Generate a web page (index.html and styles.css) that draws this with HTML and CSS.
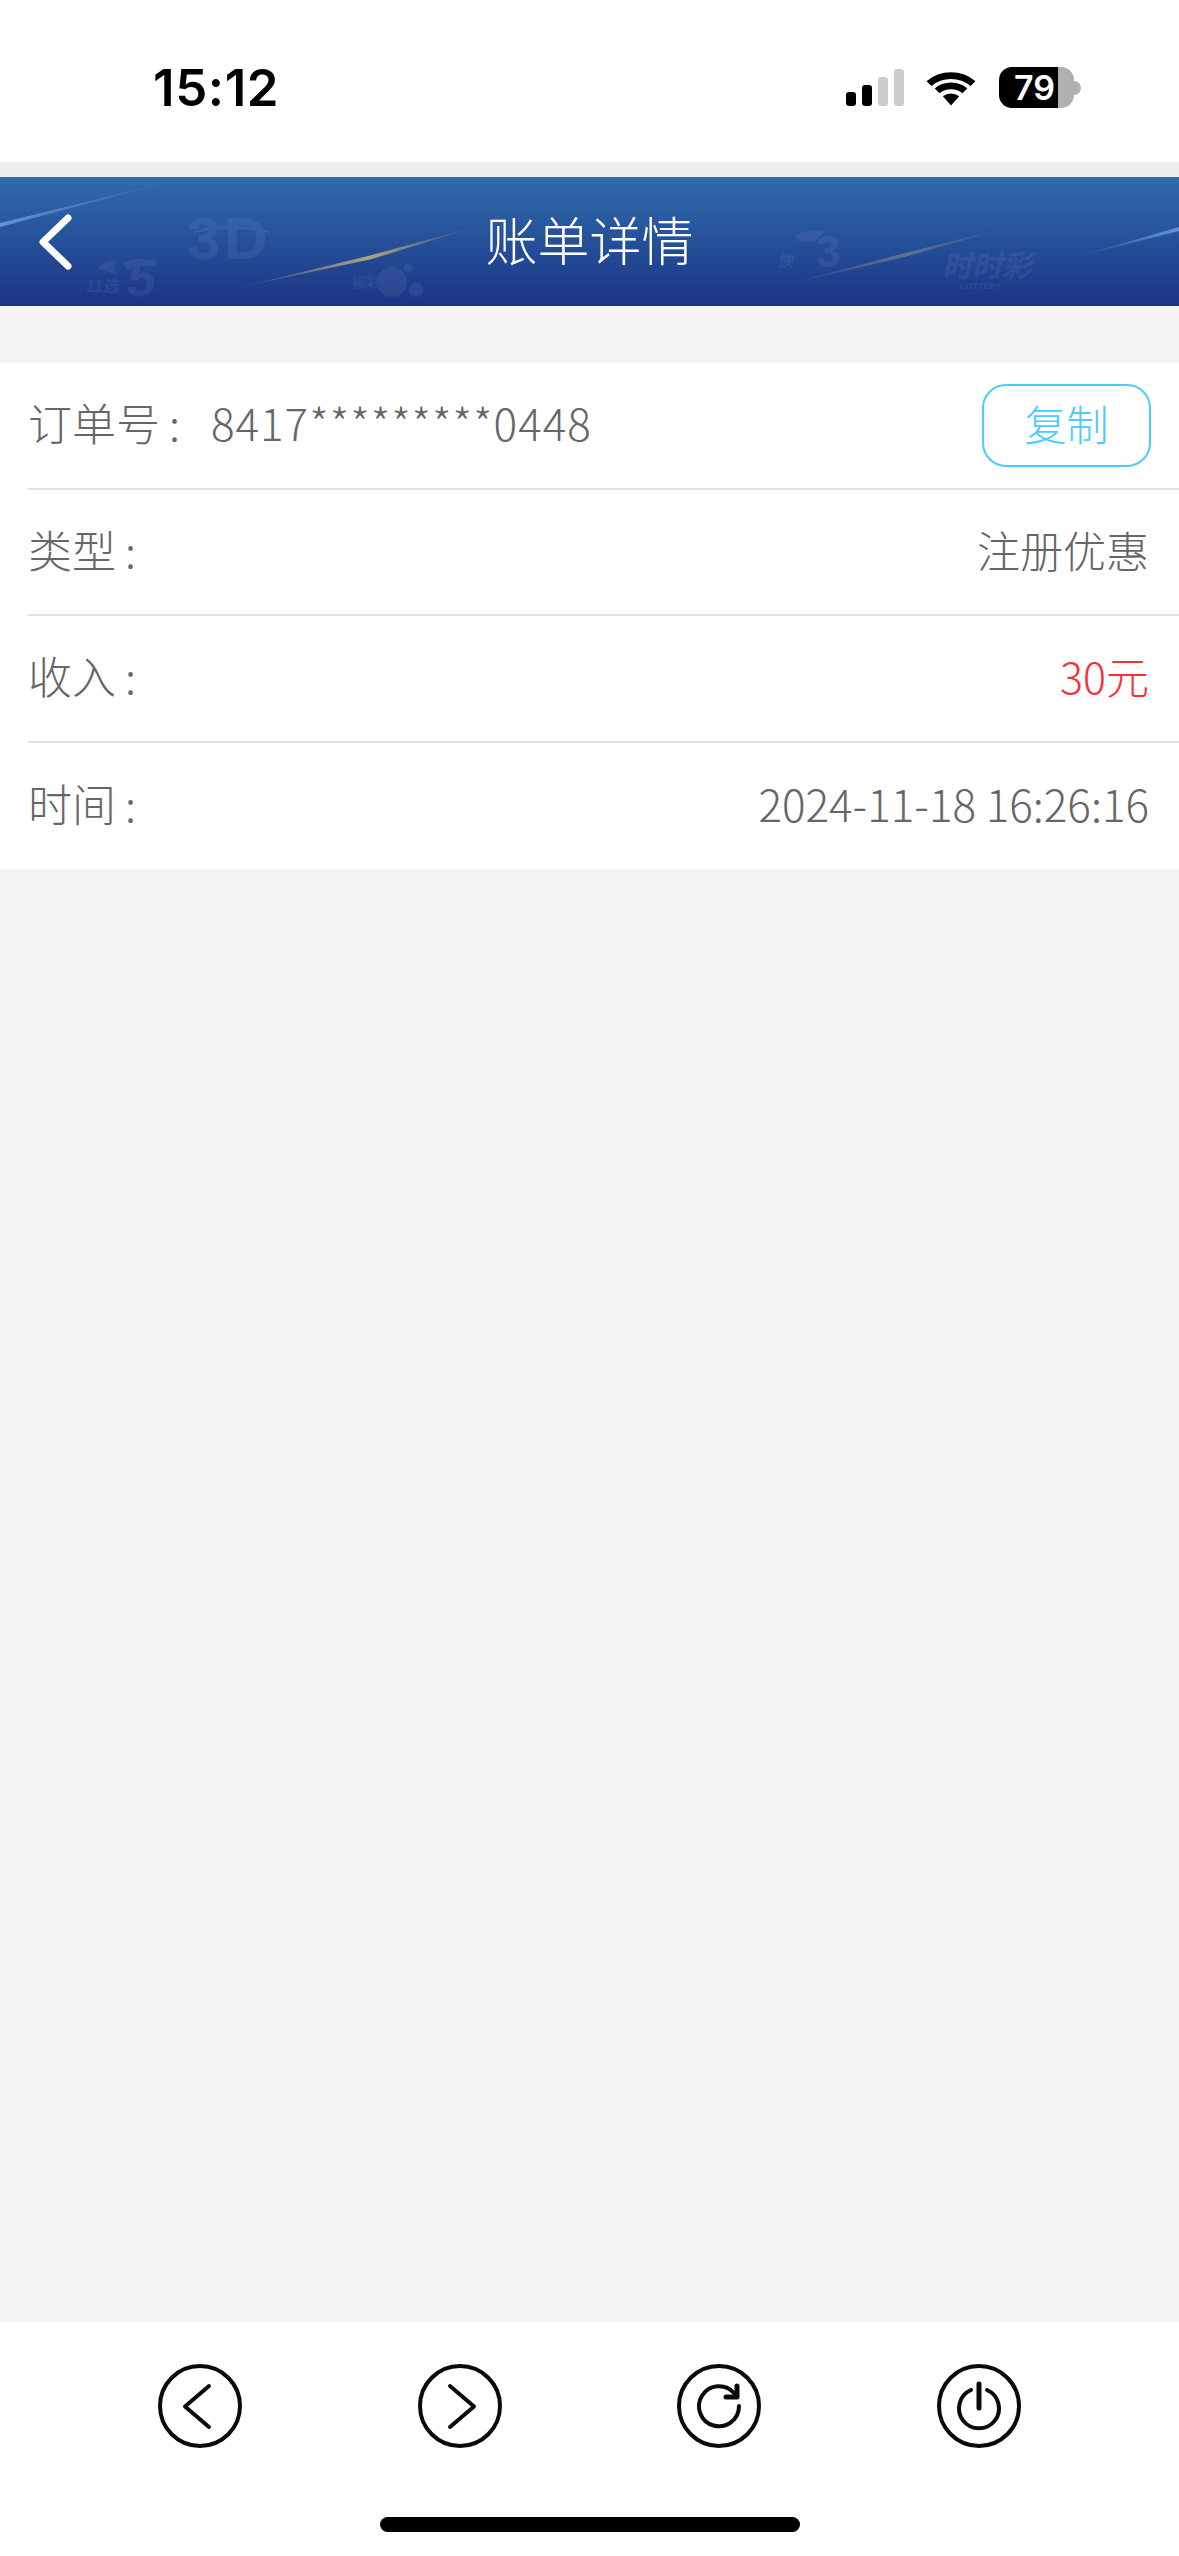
FILE: index.html
```html
<!DOCTYPE html>
<html lang="zh-CN">
<head>
    <meta charset="UTF-8">
    <meta name="viewport" content="width=device-width, initial-scale=1.0">
    <title>账单详情</title>

    <link rel="stylesheet" href="styles.css">

</head>
<body>

    <div class="page">

        <!-- status bar -->
        <div class="status">
            <span class="clock">15:12</span>
            <div class="status-icons">
                <div class="signal">
                    <i class="b1"></i>
                    <i class="b2"></i>
                    <i class="b3"></i>
                    <i class="b4"></i>
                </div>
                <svg class="wifi" width="50" height="37" viewBox="0 0 46 38" preserveAspectRatio="none">
                    <path d="M0.5 12.5 A32 32 0 0 1 45.5 12.5 L41 17.5 A26 26 0 0 0 5 17.5 Z"/>
                    <path d="M8 20 A21.5 21.5 0 0 1 38 20 L33.5 25 A15 15 0 0 0 12.5 25 Z"/>
                    <path d="M15.5 28 A11 11 0 0 1 30.5 28 L23 37.5 Z"/>
                </svg>
                <div class="battery">
                    <div class="battery-body">
                        <span class="battery-num">79</span>
                    </div>
                    <div class="battery-cap"></div>
                </div>
            </div>
        </div>

        <!-- banner -->
        <div class="banner">
            <svg class="banner-bg" width="1179" height="129" viewBox="0 0 1179 129">
                <defs>
                    <linearGradient id="blueLine" x1="0" y1="0" x2="1" y2="0">
                        <stop offset="0" stop-color="#6fa4dc" stop-opacity=".8"/>
                        <stop offset="1" stop-color="#6fa4dc" stop-opacity="0"/>
                    </linearGradient>
                    <linearGradient id="blueLine2" x1="0" y1="0" x2="1" y2="0">
                        <stop offset="0" stop-color="#6fa4dc" stop-opacity="0"/>
                        <stop offset="1" stop-color="#6fa4dc" stop-opacity=".8"/>
                    </linearGradient>
                    <linearGradient id="goldLine" x1="0" y1="0" x2="1" y2="0">
                        <stop offset="0" stop-color="#d8c27a" stop-opacity="0"/>
                        <stop offset=".55" stop-color="#d8c27a" stop-opacity=".75"/>
                        <stop offset="1" stop-color="#d8c27a" stop-opacity="0"/>
                    </linearGradient>
                    <linearGradient id="greyLine" x1="0" y1="0" x2="1" y2="0">
                        <stop offset="0" stop-color="#b8b08a" stop-opacity="0"/>
                        <stop offset=".55" stop-color="#b8b08a" stop-opacity=".4"/>
                        <stop offset="1" stop-color="#b8b08a" stop-opacity="0"/>
                    </linearGradient>
                </defs>
                <polygon points="0,46 168,5 0,50" fill="url(#blueLine)"/>
                <polygon points="237,111 368,79 475,50 372,82" fill="url(#goldLine)"/>
                <polygon points="777,110 905,76 1010,50 908,79" fill="url(#greyLine)"/>
                <polygon points="1076,80 1179,50 1179,54" fill="url(#blueLine2)"/>

                <!-- faded lottery marks -->
                <g class="mark">
                    <text class="mark-3d" x="187" y="82">3D</text>
                    <path d="M194 54 Q230 42 270 54 L270 56 Q230 48 194 56 Z"/>
                    <circle cx="232" cy="45" r="5"/>

                    <text class="mark-small" x="86" y="115">11选</text>
                    <text class="mark-big" x="127" y="119">5</text>
                    <path d="M98 92 Q104 82 116 84 Q111 92 119 98 Z"/>
                    <path d="M122 86 Q140 78 152 86 Q138 84 128 94 Z"/>

                    <circle cx="392" cy="105" r="15"/>
                    <circle cx="416" cy="113" r="7"/>
                    <circle cx="408" cy="91" r="4"/>
                    <text class="mark-tiny" x="352" y="110">福彩</text>

                    <text class="mark-small" x="777" y="90">快</text>
                    <text class="mark-big-3" x="816" y="90">3</text>
                    <path d="M796 58 Q806 52 826 54 L815 64 Q802 66 796 62 Z"/>

                    <text class="mark-ssc" x="942" y="100">时时彩</text>
                    <text class="mark-lot" x="960" y="112">LOTTERY</text>
                </g>
            </svg>
            <svg class="back" width="44" height="60" viewBox="0 0 44 60">
                <path d="M36 6 L11 30 L36 54"/>
            </svg>
            <h1 class="banner-title">账单详情</h1>
        </div>

        <!-- bill detail -->
        <div class="main">
            <div class="card">
                <div class="row">
                    <div class="left">
                        <span class="label">订单号<em class="colon">:</em></span>
                        <span class="order-no">8417*********0448</span>
                    </div>
                    <button class="copy">复制</button>
                </div>
                <div class="row">
                    <span class="label">类型<em class="colon">:</em></span>
                    <span class="value">注册优惠</span>
                </div>
                <div class="row">
                    <span class="label">收入<em class="colon">:</em></span>
                    <span class="value red">30元</span>
                </div>
                <div class="row">
                    <span class="label">时间<em class="colon">:</em></span>
                    <span class="value date">2024-11-18 16:26:16</span>
                </div>
            </div>
        </div>

        <!-- bottom tools -->
        <div class="footer">
            <div class="tools">
                <svg class="tool" width="84" height="84" viewBox="0 0 84 84">
                    <circle cx="42" cy="42" r="40"/>
                    <path d="M51 22 L27 42.5 L51 63"/>
                </svg>
                <svg class="tool" width="84" height="84" viewBox="0 0 84 84">
                    <circle cx="42" cy="42" r="40"/>
                    <path d="M32 22 L56 42.5 L32 63"/>
                </svg>
                <svg class="tool" width="84" height="84" viewBox="0 0 84 84">
                    <circle cx="42" cy="42" r="40"/>
                    <path d="M62 42 A20 20 0 1 1 57 29"/>
                    <path class="thick" d="M60 22 V33 H49"/>
                </svg>
                <svg class="tool" width="84" height="84" viewBox="0 0 84 84">
                    <circle cx="42" cy="42" r="40"/>
                    <path d="M34 26 A20 20 0 1 0 50 26"/>
                    <path class="thick" d="M42 20 V44"/>
                </svg>
            </div>
            <div class="home-bar"></div>
        </div>

    </div>

</body>
</html>
```

FILE: styles.css
```css
* {
    box-sizing: border-box;
}

body {
    margin: 0;
    background: #f4f4f4;
    font-family: "Noto Sans CJK SC", "Noto Sans", sans-serif;
}

.page {
    width: 1179px;
    height: 2556px;
    display: flex;
    flex-direction: column;
    overflow: hidden;
    background: #eee;
}

/* status bar */
.status {
    height: 162px;
    flex-shrink: 0;
    background: #fff;
    display: flex;
    justify-content: space-between;
    padding: 67px 98px 0 153px;
}

.clock {
    font-family: Inter, "Liberation Sans", sans-serif;
    font-size: 51px;
    font-weight: 600;
    line-height: 42px;
    letter-spacing: .6px;
    color: #000;
}

.status-icons {
    display: flex;
    align-items: flex-start;
}

.signal {
    display: flex;
    align-items: flex-end;
    gap: 6px;
    height: 37px;
    margin-top: 2px;
}

.signal i {
    display: block;
    width: 10px;
    border-radius: 3px;
    background: #000;
}

.signal .b1 { height: 14px; }
.signal .b2 { height: 21px; }
.signal .b3 { height: 29px; background: #ccc; }
.signal .b4 { height: 37px; background: #ccc; }

.wifi {
    margin: 2px 0 0 22px;
    fill: #000;
}

.battery {
    display: flex;
    align-items: center;
    margin-left: 23px;
}

.battery-body {
    width: 75px;
    height: 41px;
    border-radius: 13px;
    background: linear-gradient(to right, #000 59px, #b0b0b0 59px);
    padding-left: 15px;
}

.battery-num {
    font-family: Inter, "Liberation Sans", sans-serif;
    font-size: 34px;
    font-weight: 600;
    line-height: 41px;
    color: #fff;
    display: block;
}

.battery-cap {
    width: 7px;
    height: 14px;
    background: #b0b0b0;
    border-radius: 0 7px 7px 0;
}

/* banner */
.banner {
    position: relative;
    height: 129px;
    flex-shrink: 0;
    margin-top: 15px;
    background: linear-gradient(to bottom, #2f6cab, #1c3486);
    display: flex;
    align-items: center;
    justify-content: center;
}

.banner-bg {
    position: absolute;
    left: 0;
    top: 0;
}

.mark {
    fill: #fff;
    opacity: .06;
}

.mark text {
    font-family: "Liberation Sans", "Noto Sans CJK SC", sans-serif;
    font-weight: 700;
}

.mark .mark-3d { font-size: 60px; letter-spacing: 4px; }
.mark .mark-big { font-size: 52px; font-style: italic; }
.mark .mark-small { font-size: 16px; font-style: italic; }
.mark .mark-big-3 { font-size: 44px; }
.mark .mark-tiny { font-size: 14px; }
.mark .mark-ssc { font-size: 30px; font-style: italic; }
.mark .mark-lot { font-size: 9px; }

.back {
    position: absolute;
    left: 32px;
    top: 35px;
    fill: none;
    stroke: #fff;
    stroke-width: 7px;
    stroke-linecap: round;
    stroke-linejoin: round;
}

.banner-title {
    position: relative;
    margin: 0 0 6px;
    font-size: 52px;
    font-weight: 300;
    line-height: 60px;
    color: #fff;
}

/* bill detail */
.main {
    flex: 1;
    background: #f4f4f4;
    padding-top: 57px;
}

.card {
    background: #fff;
    padding-left: 28px;
}

.row {
    height: 126.5px;
    padding-right: 30px;
    border-bottom: 2px solid #e2e2e2;
    display: flex;
    align-items: center;
    justify-content: space-between;
    font-size: 44px;
    font-weight: 300;
    color: #666;
}

.row:last-child {
    border-bottom: 0;
}

/* noto sits a bit low in its line box */
.left,
.row > .label,
.value {
    margin-bottom: 6px;
}

.left {
    display: flex;
    align-items: center;
}

.colon {
    font-style: normal;
    margin-left: 9px;
}

.order-no {
    margin-left: 31px;
    letter-spacing: 1px;
}

.value {
    font-size: 43px;
}

.value.date {
    font-size: 44px;
}

.value.red {
    color: #f5303a;
}

.copy {
    width: 169px;
    height: 83px;
    margin-right: -2px;
    border: 2px solid #4accff;
    border-radius: 24px;
    background: #fff;
    color: #4accff;
    font-family: inherit;
    font-size: 42px;
    font-weight: 300;
    padding: 0 0 5px;
}

/* bottom tools */
.footer {
    height: 234px;
    flex-shrink: 0;
    background: #fff;
    padding-top: 42px;
}

.tools {
    display: grid;
    grid-template-columns: repeat(4, 1fr);
    justify-items: center;
    padding: 0 70px;
}

.tool {
    fill: none;
    stroke: #0a0a0a;
    stroke-width: 4px;
    stroke-linecap: round;
    stroke-linejoin: round;
}

.tool .thick {
    stroke-width: 5px;
}

.home-bar {
    width: 420px;
    height: 15px;
    margin: 69px auto 0;
    border-radius: 8px;
    background: #000;
}
```
